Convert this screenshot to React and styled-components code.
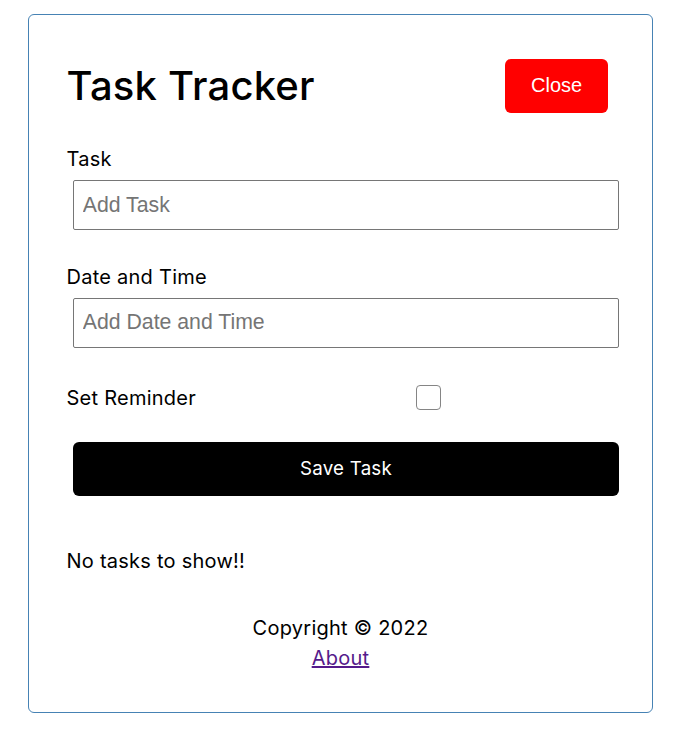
import React from 'react';
import styled, { createGlobalStyle } from 'styled-components';

const GlobalStyle = createGlobalStyle`
  * {
    box-sizing: border-box;
    margin: 0;
    padding: 0;
  }
  body {
    background: #fff;
    color: #000;
    font-family: Inter, "Open Sans", sans-serif;
  }
`;

const Container = styled.div`
  width: 625px;
  margin: 14px 0 0 28px;
  min-height: 375px;
  border: 1px solid steelblue;
  border-radius: 6px;
  padding: 37.5px 37.5px 39px;
  font-size: 20px;
  line-height: 30px;
  letter-spacing: 0.25px;
`;

const Header = styled.header`
  display: flex;
  justify-content: space-between;
  align-items: center;
  margin-bottom: 25px;
`;

const Title = styled.h1`
  font-size: 40px;
  font-weight: 500;
  line-height: 60px;
  letter-spacing: 0.2px;
`;

const Button = styled.button`
  display: ${(p) => (p.$block ? 'block' : 'inline-block')};
  width: ${(p) => (p.$block ? 'calc(100% - 1.5px)' : 'auto')};
  height: 54px;
  margin: 6.25px;
  padding: 0 26px;
  border: none;
  border-radius: 6px;
  background: ${(p) => p.$color || '#000'};
  color: #fff;
  font-family: ${(p) => (p.$plain ? '"Liberation Sans", Arial, sans-serif' : 'inherit')};
  font-size: ${(p) => (p.$plain ? '20px' : '18.75px')};
  letter-spacing: ${(p) => (p.$plain ? '0' : '0.2px')};
  cursor: pointer;
`;

const Form = styled.form`
  margin-bottom: 50px;
`;

const FormControl = styled.div`
  margin: 25px 0;
  display: ${(p) => (p.$check ? 'flex' : 'flow-root')};
  align-items: center;
  justify-content: space-between;
`;

const Label = styled.label`
  display: block;
  flex: 1;
`;

const Input = styled.input`
  display: block;
  width: calc(100% - 1.5px);
  height: 50px;
  margin: 6.25px;
  padding: 0 9px;
  border: 1px solid #767676;
  border-radius: 2px;
  font-family: "Liberation Sans", Arial, sans-serif;
  font-size: 21.25px;
  letter-spacing: 0;
  color: #000;

  &::placeholder {
    color: #757575;
  }
`;

const CheckSlot = styled.div`
  flex: 2;
  display: flex;
  justify-content: center;
  margin: 6.25px;
  padding-right: 2px;
`;

const Checkbox = styled.input`
  appearance: none;
  width: 25px;
  height: 25px;
  border: 1.5px solid #858585;
  border-radius: 4px;
  background: #fff;
`;

const Footer = styled.footer`
  margin-top: 37.5px;
  text-align: center;
`;

const Link = styled.a`
  color: #551a8b;
  text-decoration: underline;
`;

export default function App() {
  return (
    <>
      <GlobalStyle />
      <Container>
        <Header>
          <Title>Task Tracker</Title>
          <Button $color="red" $plain>Close</Button>
        </Header>
        <Form onSubmit={(e) => e.preventDefault()}>
          <FormControl>
            <Label>Task</Label>
            <Input type="text" placeholder="Add Task" />
          </FormControl>
          <FormControl>
            <Label>Date and Time</Label>
            <Input type="text" placeholder="Add Date and Time" />
          </FormControl>
          <FormControl $check>
            <Label>Set Reminder</Label>
            <CheckSlot>
              <Checkbox type="checkbox" />
            </CheckSlot>
          </FormControl>
          <Button type="submit" $block>Save Task</Button>
        </Form>
        <div>No tasks to show!!</div>
        <Footer>
          <p>Copyright &copy; 2022</p>
          <Link href="#about">About</Link>
        </Footer>
      </Container>
    </>
  );
}
